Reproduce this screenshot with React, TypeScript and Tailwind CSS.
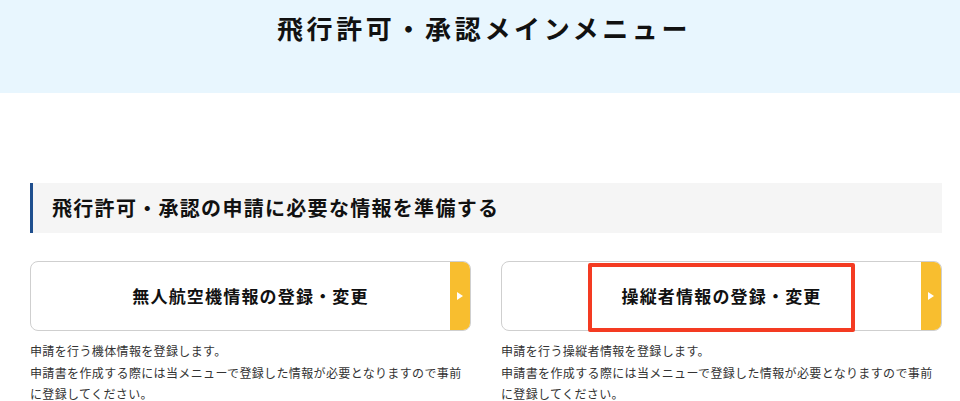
export default function App() {
  const cards = [
    {
      title: "無人航空機情報の登録・変更",
      lead: "申請を行う機体情報を登録します。",
      marked: false,
    },
    {
      title: "操縦者情報の登録・変更",
      lead: "申請を行う操縦者情報を登録します。",
      marked: true,
    },
  ];

  return (
    <div
      className="min-h-[401px] w-[960px] overflow-hidden bg-white text-[#222]"
      style={{ fontFamily: '"Noto Sans CJK JP", "Noto Sans", sans-serif' }}
    >
      {/* Page header */}
      <header className="h-[93px] bg-[#e8f6fe] pt-[10px] text-center">
        <h1 className="pl-[8px] text-[26px] font-bold leading-[36px] tracking-[0.14em] text-[#111]">
          飛行許可・承認メインメニュー
        </h1>
      </header>

      <main className="pl-[30px] pr-[18px] pt-[90px]">
        <h2 className="flex h-[50px] items-center border-l-[3px] border-[#1f4f8e] bg-[#f5f5f5] pl-[19px] text-[20px] font-bold tracking-[0.065em] text-[#111]">
          飛行許可・承認の申請に必要な情報を準備する
        </h2>

        <div className="mt-[28px] grid grid-cols-2 gap-[30px]">
          {cards.map((card) => (
            <div key={card.title}>
              <div className="relative">
                <a
                  href="#"
                  className="relative flex h-[70px] items-center justify-center overflow-hidden rounded-[8px] border border-[#cfcfcf] bg-white"
                >
                  <span className="text-[17px] font-bold tracking-[0.07em] text-[#111]">
                    {card.title}
                  </span>
                  <span className="absolute right-0 top-0 flex h-full w-[20px] items-center justify-center bg-[#f8be2f]">
                    <span className="h-0 w-0 border-y-[4px] border-l-[6px] border-y-transparent border-l-white" />
                  </span>
                </a>
                {card.marked && (
                  <div className="absolute left-[87px] top-[2px] h-[69px] w-[267px] rounded-[2px] border-[4px] border-[#f43b22]" />
                )}
              </div>
              <p className="mt-[9px] text-[12px] leading-[21.5px] tracking-[0.03em] text-[#333]">
                {card.lead}
                <br />
                申請書を作成する際には当メニューで登録した情報が必要となりますので事前に登録してください。
              </p>
            </div>
          ))}
        </div>
      </main>
    </div>
  );
}
